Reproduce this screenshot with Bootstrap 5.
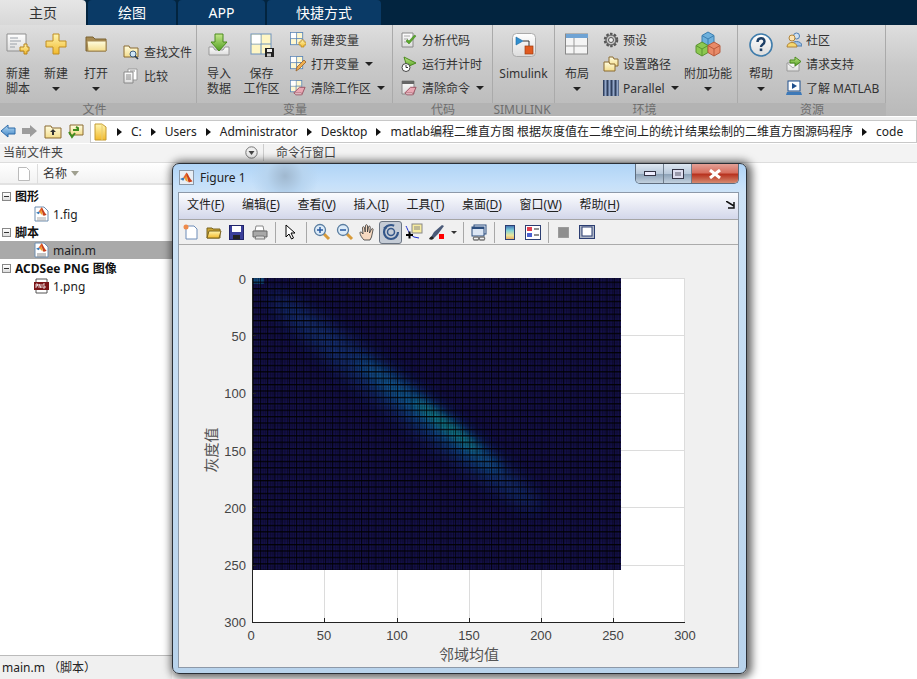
<!DOCTYPE html>
<html lang="zh">
<head>
<meta charset="utf-8">
<title>MATLAB</title>
<link href="https://cdn.jsdelivr.net/npm/bootstrap@5.3.0/dist/css/bootstrap.min.css" rel="stylesheet">
<style>
html,body{margin:0;height:679px;overflow:hidden}
body{font:12px/15px "Noto Sans","Noto Sans CJK SC",sans-serif;color:#333;background:#fff;position:relative;width:917px}
svg{display:block;flex:none}
.gdefs{width:0;height:0;position:absolute}
.topbar{height:25px;background:#02243f;gap:2px}
.ttab{height:25px;width:88px;color:#fff;font-size:14px;line-height:25px;text-align:center;background:#0a3a66;border-radius:4px 4px 0 0}
.ttab.on{background:linear-gradient(#e6e6e6,#d8d8d8);color:#333;width:86px;border-radius:0 4px 0 0}
.ttab.t3{width:87px}.ttab.t4{width:114px}
.ribbon{height:91px;background:linear-gradient(#dedede,#c9c9c9 45%,#b9b9b9)}
.rgrp{display:flex;flex-direction:column;flex:none;border-right:1px solid #aaa;position:relative}
.rbody{height:78px;padding-top:3px;display:flex;flex:none}
.rband{height:13px;background:#b3b3b3;color:#6e6e6e;text-align:center;line-height:14px;font-size:12px;margin-right:-1px}
.big{display:flex;flex-direction:column;align-items:center;flex:none;text-align:center}
.big .ib{height:38px;padding-top:5px}
.twol{font-family:"DejaVu Sans","Noto Sans CJK SC",sans-serif;margin-top:1px}
.smc{display:flex;flex-direction:column;flex:none}
.smi{height:24px;display:flex;align-items:center;gap:5px;white-space:nowrap;position:relative}
.tri{display:inline-block;border-style:solid;border-width:4px 4px 0;border-color:#222 transparent transparent;flex:none}
.big .tri{margin-top:6px;margin-bottom:5px}
.triR{display:inline-block;border-style:solid;border-width:4px 0 4px 5px;border-color:transparent transparent transparent #111;flex:none}
.addr{height:28px;background:#f0f0f0;border-bottom:1px solid #fff;box-shadow:inset 0 1px 0 #fff;padding-top:4px}
.pathbox{background:#fff;border:1px solid #c8c8c8;height:23px;margin-left:6px;flex:1;gap:9px;padding-left:3px;white-space:nowrap;overflow:hidden;color:#222}
.panehd{height:19px;background:#f3f3f3;color:#444;border-bottom:1px solid #ddd;padding-bottom:2px}
.panehd .pl{width:264px;padding-left:3px;border-right:1px solid #ccc;margin-right:12px;height:17px;justify-content:space-between;padding-right:5px}
.lside{width:172px;height:492px;position:absolute;left:0;top:163px;background:#fff}
.thead{height:22px;background:linear-gradient(#fff,#f2f2f2);border-bottom:2px solid #e2e2e2;position:relative;margin-bottom:2px;padding-top:1px}
.thead .csep{width:1px;height:20px;background:#ddd;margin:0 5px 0 19px}
.trow{height:18px;display:flex;align-items:center;white-space:nowrap;color:#222}
.trow.sec{font-weight:700;color:#111;padding-left:2px;gap:4px}
.trow.fil{padding-left:34px;gap:4px}
.trow.sel{background:#a9a9a9}
.pm{width:9px;height:9px;border:1px solid #888;background:linear-gradient(#fff,#ddd);position:relative;flex:none}
.pm::after{content:"";position:absolute;left:1px;top:3px;width:5px;height:1px;background:#333}
.stat{position:absolute;left:0;bottom:0;width:172px;height:24px;background:#f0f0f0;border-top:1px solid #bbb;padding:4px 2px;color:#222}
.fwin{position:absolute;left:172px;top:163px;width:575px;height:511px;border:1px solid #2a2f36;border-radius:7px;background:radial-gradient(circle at 112px 12px,#a0b8cf 0,#b7d4ef 18px,transparent 34px),linear-gradient(#b0d4f6,#c5e0fa 20px,#cde3f7 28px,#b8d3ec);box-shadow:2px 1px 9px 3px rgba(0,0,0,.6);overflow:hidden}
.wtitle{height:28px;padding-left:6px;padding-bottom:1px;gap:6px;color:#222;position:relative}
.wctl{position:absolute;right:7px;top:0;height:20px;display:flex;border:1px solid #5f6d7e;border-top:0;border-radius:0 0 5px 5px;overflow:hidden}
.wctl span{display:flex;align-items:center;justify-content:center;width:28px;background:linear-gradient(#dde7f1,#b9c9da 50%,#8ea3b8 55%,#c2d1df);border-right:1px solid #6f7d8c}
.wctl .cx{width:46px;border:0;background:linear-gradient(#e3a096,#d77060 45%,#b83420 55%,#d58a70)}
.wbody{margin:0 7px 0 5px;height:476px;border:1px solid #8d99a8;background:#f0f0f0;display:flex;flex-direction:column}
.wmenu{height:26px;background:linear-gradient(#fbfcfe,#d3d7ea);padding:0 0 3px 8px;gap:17.6px;position:relative;color:#222;white-space:nowrap;flex:none}
.wmenu u{text-underline-offset:2px}
.wmore{position:absolute;right:3px;top:8px}
.wtool{height:26px;background:#f0f0f0;border-top:1px solid #a5a5a5;border-bottom:1px solid #ababab;flex:none;align-items:center}
.tb{width:23px;height:23px;display:flex;align-items:center;justify-content:center;flex:none}
.tb.pressed{border:1px solid #6a7482;border-radius:3px;background:#c5ccd6}
.tsep{width:1px;height:21px;background:#a8a8a8;margin:0 3px 0 4px;flex:none}
.axt{font:13px "Liberation Sans",sans-serif;fill:#444}
.axl{font:15px "Liberation Serif","Noto Sans CJK SC",serif;fill:#555}
</style>
</head>
<body>
<svg class="gdefs" aria-hidden="true">
<defs>
<linearGradient id="gy" x1="0" y1="0" x2="0" y2="1"><stop offset="0" stop-color="#fff6b0"/><stop offset="1" stop-color="#f2b92c"/></linearGradient>
<linearGradient id="gf" x1="0" y1="0" x2="0" y2="1"><stop offset="0" stop-color="#fffde0"/><stop offset="1" stop-color="#f3dc8c"/></linearGradient>
<linearGradient id="gg" x1="0" y1="0" x2="0" y2="1"><stop offset="0" stop-color="#c5e88a"/><stop offset="1" stop-color="#4f9e20"/></linearGradient>
<linearGradient id="gp" x1="0" y1="0" x2="0" y2="1"><stop offset="0" stop-color="#fff"/><stop offset="1" stop-color="#dcdcdc"/></linearGradient>
<linearGradient id="gb" x1="0" y1="0" x2="0" y2="1"><stop offset="0" stop-color="#b8ddf6"/><stop offset="1" stop-color="#3e82c4"/></linearGradient>
<linearGradient id="gc" x1="0" y1="0" x2="0" y2="1"><stop offset="0" stop-color="#3d6db0"/><stop offset=".35" stop-color="#7fd0d8"/><stop offset=".7" stop-color="#e8e69a"/><stop offset="1" stop-color="#e9a860"/></linearGradient>
<filter id="b8" x="-30%" y="-100%" width="160%" height="300%"><feGaussianBlur stdDeviation="8"/></filter>
<filter id="b5" x="-30%" y="-100%" width="160%" height="300%"><feGaussianBlur stdDeviation="6"/></filter>
<filter id="b3" x="-30%" y="-100%" width="160%" height="300%"><feGaussianBlur stdDeviation="4"/></filter>
<pattern id="pv" width="7.22" height="10" patternUnits="userSpaceOnUse"><rect width="1.1" height="10" fill="#000" opacity=".8"/><rect x="2.9" width="1" height="10" fill="#000" opacity=".42"/><rect x="5.3" width="1" height="10" fill="#000" opacity=".42"/></pattern>
<pattern id="ph" width="10" height="6.4" patternUnits="userSpaceOnUse"><rect width="10" height="1.3" fill="#000" opacity=".92"/><rect y="3.2" width="10" height=".8" fill="#000" opacity=".25"/></pattern>
<symbol id="grid" viewBox="0 0 16 16"><rect x=".5" y=".5" width="14" height="14" fill="#fff8cf" stroke="#5a86b8"/><path d="M7.5 1v13M1 7.5h13" stroke="#5a86b8"/><rect x="1" y="1" width="6" height="6" fill="#fff"/></symbol>
<symbol id="eras" viewBox="0 0 14 10"><path d="M1 7l6-6h6l-3 7-1 1H3z" fill="#e9a8b4" stroke="#96505f"/><path d="M1 7h8l1 2H3z" fill="#f3d6dc" stroke="#96505f" stroke-width=".7"/></symbol>
<symbol id="mlogo" viewBox="0 0 14 14"><path d="M0 8.5l3.5-1.6L5 8 3.5 10.5z" fill="#3a7bb8"/><path d="M3.5 7L7 1.5l2 3-3 4z" fill="#e6642c"/><path d="M7 1.5c2 2 3.5 7 6.5 9.500-2 .8-3 1-4 1.500C8 10 7.500 6 7 1.500z" fill="#c8401c"/><path d="M5 8l2-3 1.500 7-2.500-2z" fill="#f0a030"/></symbol>
</defs>
</svg>

<div class="topbar d-flex">
  <div class="ttab on">主页</div><div class="ttab">绘图</div><div class="ttab t3">APP</div><div class="ttab t4">快捷方式</div>
</div>

<div class="ribbon d-flex">
  <section class="rgrp" style="width:197px">
    <div class="rbody">
      <div class="big" style="width:36px"><div class="ib"><svg width="24" height="24" viewBox="0 0 24 24"><path d="M1 1h19v17H1z" fill="url(#gp)" stroke="#8f8f8f"/><path d="M4 5h8M4 8h11M4 11h7M4 14h5" stroke="#9aa0a8"/><path d="M15 13h4v-3h3v3h2v4h-2v3h-3v-3h-4z" fill="url(#gy)" stroke="#b9851c" transform="translate(-1 1)"/></svg></div><div class="twol">新建<br>脚本</div></div>
      <div class="big ms-0" style="width:40px;margin-left:2px"><div class="ib"><svg width="22" height="24" viewBox="0 0 22 24"><path d="M8 1h6v7h7v6h-7v7H8v-7H1V8h7z" fill="url(#gy)" stroke="#c08d20"/></svg></div><div>新建</div><i class="tri"></i></div>
      <div class="big" style="width:40px"><div class="ib"><svg width="22" height="22" viewBox="0 0 22 22"><path d="M1 4h7l2 2h11v12H1z" fill="#a68a52" stroke="#7b6233"/><path d="M2 8h19v10H3z" fill="url(#gf)" stroke="#a68a52"/></svg></div><div>打开</div><i class="tri"></i></div>
      <div class="smc" style="margin-left:7px;padding-top:12px">
        <div class="smi"><svg width="16" height="16" viewBox="0 0 16 16"><path d="M1 2h5l1 2h8v9H1z" fill="url(#gf)" stroke="#8a6a30"/><circle cx="10" cy="10" r="3" fill="#cfe6f6" stroke="#3e5f80"/><path d="M12 12l3 3" stroke="#2c3e52" stroke-width="1.600"/></svg>查找文件</div>
        <div class="smi"><svg width="16" height="16" viewBox="0 0 16 16"><path d="M5 1h9v11H5z" fill="#fff" stroke="#999"/><path d="M1 4h9v11H1z" fill="url(#gp)" stroke="#888"/><path d="M3 7h5M3 9h5M3 11h5M7 3h5" stroke="#888"/></svg>比较</div>
      </div>
    </div>
    <div class="rband pe-2">文件</div>
  </section>
  <section class="rgrp" style="width:196px">
    <div class="rbody">
      <div class="big" style="width:42px;margin-left:1px"><div class="ib"><svg width="24" height="24" viewBox="0 0 24 24"><path d="M2 14h4l2 3h8l2-3h4v8H2z" fill="url(#gp)" stroke="#999"/><path d="M8 1h8v8h4l-8 9-8-9h4z" fill="url(#gg)" stroke="#4a8a1e"/></svg></div><div class="twol">导入<br>数据</div></div>
      <div class="big" style="width:43px"><div class="ib"><svg width="24" height="24" viewBox="0 0 24 24"><rect x="1" y="1" width="20" height="20" fill="#fff6c4" stroke="#6f94bd"/><path d="M11 1v20M1 11h20" stroke="#6f94bd"/><rect x="2" y="2" width="8.500" height="8.500" fill="#fff"/><rect x="15" y="15" width="9" height="9" fill="#222"/><rect x="17" y="16" width="5" height="3" fill="#eee"/><rect x="17" y="20.500" width="4" height="3" fill="#ccc"/></svg></div><div class="twol">保存<br>工作区</div></div>
      <div class="smc" style="margin-left:7px">
        <div class="smi"><svg width="16" height="16" viewBox="0 0 16 16"><use href="#grid" width="14" height="14"/><path d="M9 10h2V8h3v2h2v3h-2v2h-3v-2H9z" fill="url(#gy)" stroke="#b9851c" stroke-width=".7"/></svg>新建变量</div>
        <div class="smi"><svg width="16" height="16" viewBox="0 0 16 16"><use href="#grid" width="14" height="14"/><path d="M6 15l1-4 7-7 2 2-7 7z" fill="#f0b050" stroke="#95602a" stroke-width=".8"/></svg>打开变量<i class="tri" style="margin-left:1px"></i></div>
        <div class="smi"><svg width="16" height="16" viewBox="0 0 16 16"><use href="#grid" width="13" height="13"/><use href="#eras" x="3" y="6" width="13" height="10"/></svg>清除工作区<i class="tri" style="margin-left:1px"></i></div>
      </div>
    </div>
    <div class="rband">变量</div>
  </section>
  <section class="rgrp" style="width:100px">
    <div class="rbody">
      <div class="smc" style="margin-left:8px">
        <div class="smi"><svg width="16" height="16" viewBox="0 0 16 16"><path d="M1 1h11v14H1z" fill="url(#gp)" stroke="#888"/><path d="M3 4h6M3 7h4M3 10h3" stroke="#aaa"/><path d="M5 9l3 3 7-8-1.500-1L8 9 6.500 7.500z" fill="#5aa92c" stroke="#3d7a1c" stroke-width=".5"/></svg>分析代码</div>
        <div class="smi"><svg width="16" height="16" viewBox="0 0 16 16"><path d="M3 1l12 6-9 4z" fill="url(#gg)" stroke="#4a8a1e"/><circle cx="5" cy="11.500" r="4" fill="#fff" stroke="#444"/><path d="M5 9v2.500h2" stroke="#333" fill="none"/></svg>运行并计时</div>
        <div class="smi"><svg width="16" height="16" viewBox="0 0 16 16"><path d="M1 1h12v13H1z" fill="url(#gp)" stroke="#888"/><path d="M1 1h12v3H1z" fill="#666"/><use href="#eras" x="3" y="6" width="13" height="10"/></svg>清除命令<i class="tri" style="margin-left:1px"></i></div>
      </div>
    </div>
    <div class="rband">代码</div>
  </section>
  <section class="rgrp" style="width:62px">
    <div class="rbody">
      <div class="big w-100"><div class="ib"><svg width="24" height="24" viewBox="0 0 24 24"><rect x=".5" y=".5" width="23" height="23" rx="4" fill="url(#gp)" stroke="#aaa"/><path d="M4 4l7 4-7 4z" fill="#2f8fd0" stroke="#1c6aa0" stroke-width=".6"/><path d="M11 8h6v5" stroke="#333" fill="none"/><rect x="13" y="13" width="8" height="8" fill="#e05a20" stroke="#a03c10" stroke-width=".7"/></svg></div><div>Simulink</div></div>
    </div>
    <div class="rband pe-1">SIMULINK</div>
  </section>
  <section class="rgrp" style="width:183px">
    <div class="rbody">
      <div class="big" style="width:44px"><div class="ib"><svg width="24" height="22" viewBox="0 0 24 22"><rect x=".5" y="1" width="22" height="20" fill="#f4f4f4" stroke="#888"/><rect x="1" y="1" width="22" height="4" fill="#6fa3d4"/><path d="M1 13h22M9 5v16" stroke="#999"/></svg></div><div>布局</div><i class="tri"></i></div>
      <div class="smc" style="margin-left:4px;width:76px">
        <div class="smi"><svg width="16" height="16" viewBox="0 0 16 16"><circle cx="8" cy="8" r="6" fill="#c8c8c8" stroke="#555" stroke-width="2.500" stroke-dasharray="2.400 1.400"/><circle cx="8" cy="8" r="5" fill="none" stroke="#666" stroke-width="1.200"/><circle cx="8" cy="8" r="2.500" fill="#eee" stroke="#555"/></svg><span style="margin-left:-1px">预设</span></div>
        <div class="smi"><svg width="16" height="16" viewBox="0 0 16 16"><path d="M6 1h4l1 2h4v7H6z" fill="url(#gf)" stroke="#8a6a30"/><path d="M1 6h5l1 2h5v7H1z" fill="url(#gf)" stroke="#8a6a30"/></svg><span style="margin-left:-1px">设置路径</span></div>
        <div class="smi"><svg width="16" height="16" viewBox="0 0 16 16"><rect x="0" y="0" width="16" height="16" fill="#30405e"/><path d="M2.500 0v16M6.500 0v16M10.500 0v16M14.500 0v16" stroke="#92a6c8" stroke-width="2"/></svg><span style="margin-left:-1px">Parallel</span><i class="tri" style="margin-left:1px"></i></div>
      </div>
      <div class="big" style="width:56px;margin-left:1px"><div class="ib"><svg width="26" height="26" viewBox="0 0 26 26" style="margin-top:-2px"><path d="M13 1l6 3.500v7L13 15l-6-3.500v-7z" fill="#6eb0dc" stroke="#3b7eb0"/><path d="M7 4.500l6 3.500 6-3.500M13 8v7" fill="none" stroke="#3b7eb0"/><path d="M7 11l6 3.500v7L7 25l-6-3.500v-7z" fill="#8cc850" stroke="#5a9430"/><path d="M1 14.500L7 18l6-3.500M7 18v7" fill="none" stroke="#5a9430"/><path d="M19 11l6 3.500v7L19 25l-6-3.500v-7z" fill="#e88a68" stroke="#b85a3c"/><path d="M13 14.500l6 3.500 6-3.500M19 18v7" fill="none" stroke="#b85a3c"/></svg></div><div class="text-nowrap">附加功能</div><i class="tri"></i></div>
    </div>
    <div class="rband pe-1">环境</div>
  </section>
  <section class="rgrp" style="width:148px">
    <div class="rbody">
      <div class="big" style="width:46px"><div class="ib"><svg width="24" height="24" viewBox="0 0 24 24"><circle cx="12" cy="12" r="11" fill="url(#gp)" stroke="#3f7cab" stroke-width="1.600"/><path d="M8.500 9c0-5 7-5 7-.500 0 3-3.500 3-3.500 5.500" fill="none" stroke="#1d3f66" stroke-width="2.400"/><rect x="10.700" y="15.500" width="2.600" height="2.600" fill="#1d3f66"/></svg></div><div>帮助</div><i class="tri"></i></div>
      <div class="smc" style="margin-left:2px">
        <div class="smi"><svg width="16" height="16" viewBox="0 0 16 16"><circle cx="10.500" cy="4" r="3" fill="#cfe0f2" stroke="#4f7eb0"/><path d="M5 14c0-6 11-6 11 0z" fill="#9fc0e4" stroke="#4f7eb0"/><circle cx="6" cy="6" r="3" fill="#fde2b0" stroke="#b0843a"/><path d="M1 15c0-6 10-6 10 0z" fill="#f5d870" stroke="#b0843a"/></svg><span style="margin-left:-1px">社区</span></div>
        <div class="smi"><svg width="16" height="16" viewBox="0 0 16 16"><path d="M1 7h12v8H1z" fill="url(#gp)" stroke="#999"/><path d="M1 7l6 5 6-5" fill="none" stroke="#aaa"/><path d="M4 4h5V1l6 4.500-6 4.500V7H4z" fill="url(#gg)" stroke="#4a8a1e"/></svg><span style="margin-left:-1px">请求支持</span></div>
        <div class="smi"><svg width="16" height="16" viewBox="0 0 16 16"><rect x="2" y="1" width="12" height="10" fill="#fff" stroke="#1f4f8c"/><path d="M6 3l5 3-5 3z" fill="#1f4f8c"/><path d="M1 12h14l1 3H0z" fill="#3d79b8"/></svg><span style="margin-left:-1px">了解 MATLAB</span></div>
      </div>
    </div>
    <div class="rband">资源</div>
  </section>
  <div class="flex-fill"></div>
</div>

<div class="addr d-flex align-items-start">
  <svg width="16" height="22" viewBox="0 0 16 22"><path d="M1 11l7-6v3h7v6H8v3z" fill="url(#gb)" stroke="#2d6aa8"/></svg>
  <svg width="17" height="22" viewBox="0 0 17 22" style="margin-left:5px"><path d="M16 11l-7-6v3H1v6h8v3z" fill="#9c9c9c"/></svg>
  <svg width="18" height="22" viewBox="0 0 18 22" style="margin-left:6px"><path d="M1 6h6l1 2h9v10H1z" fill="url(#gf)" stroke="#8a6a30"/><path d="M9 9l3 3h-2v3H8v-3H6z" fill="#333"/></svg>
  <svg width="17" height="22" viewBox="0 0 17 22" style="margin-left:5px"><path d="M3 5h13v10H3z" fill="url(#gf)" stroke="#8a6a30"/><path d="M6 10h5V8l-2-1M2 12l3 5 3-4" fill="none" stroke="#3f8c1f" stroke-width="2"/></svg>
  <div class="pathbox d-flex align-items-center">
    <svg width="13" height="18" viewBox="0 0 13 18" style="margin-right:1px"><path d="M1 1h7l4 3v13H1z" fill="url(#gy)" stroke="#c49a30"/><path d="M8 1v16" stroke="#e7cc70"/></svg>
    <i class="triR"></i><span>C:</span><i class="triR"></i><span>Users</span><i class="triR"></i><span>Administrator</span><i class="triR"></i><span>Desktop</span><i class="triR"></i><span>matlab编程二维直方图 根据灰度值在二维空间上的统计结果绘制的二维直方图源码程序</span><i class="triR"></i><span>code</span>
  </div>
</div>

<div class="panehd d-flex align-items-center">
  <div class="pl d-flex align-items-center"><span>当前文件夹</span><svg width="13" height="13" viewBox="0 0 13 13"><circle cx="6.500" cy="6.500" r="5.700" fill="#eee" stroke="#777"/><path d="M3.500 5h6l-3 4z" fill="#444"/></svg></div>
  <span>命令行窗口</span>
</div>

<aside class="lside">
  <div class="thead d-flex align-items-center">
    <svg width="12" height="14" viewBox="0 0 12 14" style="margin-left:18px;margin-right:-12px"><path d="M.5.500h8l3 3v10H.500z" fill="#fff" stroke="#bbb"/></svg>
    <div class="csep" style="margin-left:19px"></div><span>名称</span><i class="tri ms-1" style="border-width:5px 4px 0;border-top-color:#a0a090"></i>
  </div>
  <div class="trow sec"><i class="pm"></i>图形</div>
  <div class="trow fil"><svg width="15" height="16" viewBox="0 0 15 16"><path d="M1 1h9l4 4v10H1z" fill="#fff" stroke="#6d8db0"/><use href="#mlogo" x="2" y="0" width="11" height="11"/><path d="M3 12h9M3 14h9" stroke="#aaa"/></svg>1.fig</div>
  <div class="trow sec"><i class="pm"></i>脚本</div>
  <div class="trow fil sel"><svg width="15" height="16" viewBox="0 0 15 16"><path d="M1 1h9l4 4v10H1z" fill="#fff" stroke="#6d8db0"/><use href="#mlogo" x="2" y="0" width="11" height="11"/><path d="M3 12h9M3 14h9" stroke="#888"/></svg>main.m</div>
  <div class="trow sec"><i class="pm"></i>ACDSee PNG 图像</div>
  <div class="trow fil"><svg width="15" height="16" viewBox="0 0 15 16"><path d="M2 1h11v14H2z" fill="#fff" stroke="#555"/><rect x="0" y="4" width="15" height="8" fill="#7a1418"/><path d="M2 10V6h1.500v2H2M5 10V6l2 4V6M11 6H9v4h2V8h-1" fill="none" stroke="#fff" stroke-width=".8"/></svg>1.png</div>
</aside>
<div class="stat">main.m （脚本）</div>

<div class="fwin">
  <div class="wtitle d-flex align-items-center">
    <svg width="15" height="15" viewBox="0 0 15 15"><rect x=".5" y=".5" width="14" height="14" fill="#e8eef5" stroke="#8a97a6"/><use href="#mlogo" x="1" y="1" width="13" height="13"/></svg>
    <span>Figure 1</span>
    <div class="wctl"><span><svg width="12" height="6" viewBox="0 0 12 6"><rect x=".5" y=".5" width="11" height="4" fill="#eef" stroke="#334"/></svg></span><span><svg width="12" height="10" viewBox="0 0 12 10"><rect x=".5" y=".5" width="11" height="9" fill="#dde" stroke="#334"/><rect x="3" y="3" width="6" height="4" fill="#99a"/></svg></span><span class="cx"><svg width="14" height="10" viewBox="0 0 14 10"><path d="M2 1l10 8M12 1L2 9" stroke="#fff" stroke-width="3"/></svg></span></div>
  </div>
  <div class="wbody">
    <div class="wmenu d-flex align-items-center">
      <span>文件(<u>F</u>)</span><span>编辑(<u>E</u>)</span><span>查看(<u>V</u>)</span><span>插入(<u>I</u>)</span><span>工具(<u>T</u>)</span><span>桌面(<u>D</u>)</span><span>窗口(<u>W</u>)</span><span>帮助(<u>H</u>)</span>
      <svg class="wmore" width="9" height="8" viewBox="0 0 9 8"><path d="M0 0l8 5M8 1v6H2" fill="none" stroke="#111" stroke-width="1.500"/></svg>
    </div>
    <div class="wtool d-flex">
      <span class="tb"><svg width="16" height="16" viewBox="0 0 16 16"><path d="M3 2h8l3 3v10H3z" fill="#fff" stroke="#6c8cb8"/><circle cx="3" cy="3" r="2.500" fill="#ee8a4a"/></svg></span>
      <span class="tb"><svg width="16" height="14" viewBox="0 0 16 14"><path d="M1 3h5l1 1h7v9H1z" fill="#c9a432" stroke="#7a6420"/><path d="M1 13l2-7h12l-2 7z" fill="url(#gy)" stroke="#7a6420"/></svg></span>
      <span class="tb"><svg width="15" height="15" viewBox="0 0 15 15"><rect x=".5" y=".5" width="14" height="14" fill="#3a3f9a" stroke="#20246a"/><rect x="3" y="1" width="9" height="6" fill="#fff"/><rect x="4" y="10" width="7" height="4.500" fill="#222"/></svg></span>
      <span class="tb"><svg width="16" height="15" viewBox="0 0 16 15"><path d="M4 1h7l1 5H3z" fill="#fff" stroke="#888"/><path d="M1 6h14v6H1z" fill="#a8a8a8" stroke="#666"/><path d="M4 11h8l1 3H3z" fill="#ddd" stroke="#777"/></svg></span>
      <i class="tsep"></i>
      <span class="tb"><svg width="12" height="16" viewBox="0 0 12 16"><path d="M1 1v12l3-3 2.500 5 2-1-2.500-5h4z" fill="#fff" stroke="#000"/></svg></span>
      <i class="tsep"></i>
      <span class="tb"><svg width="18" height="18" viewBox="0 0 18 18"><path d="M10 10l6 6" stroke="#d79a3a" stroke-width="3"/><circle cx="7" cy="7" r="5.500" fill="#dcebf8" stroke="#5a7da0" stroke-width="1.300"/><path d="M4 7h6M7 4v6" stroke="#2a5aa0" stroke-width="1.500"/></svg></span>
      <span class="tb"><svg width="18" height="18" viewBox="0 0 18 18"><path d="M10 10l6 6" stroke="#d79a3a" stroke-width="3"/><circle cx="7" cy="7" r="5.500" fill="#dcebf8" stroke="#5a7da0" stroke-width="1.300"/><path d="M4 7h6" stroke="#2a5aa0" stroke-width="1.500"/></svg></span>
      <span class="tb"><svg width="17" height="17" viewBox="0 0 17 17"><path d="M5 16c-2-2-4-5-4-7s2-1 3 1L3.500 4c0-2 2-1.500 2 0l.7 4L6.500 2c0-2 2-1.500 2 0v6l1-5c.3-1.500 2-1 1.800.500L10.500 9l2-4c.8-1.200 2 0 1.500 1L12.500 13 11 16z" fill="#f7d9c0" stroke="#333" stroke-width=".8"/></svg></span>
      <span class="tb pressed"><svg width="18" height="18" viewBox="0 0 18 18"><circle cx="9" cy="9" r="7" fill="none" stroke="#34578a" stroke-width="2.200" stroke-dasharray="36 8"/><path d="M1 5l3.500 1L5 2z" fill="#34578a"/><circle cx="9" cy="9" r="3.500" fill="none" stroke="#34578a" stroke-width="1.500"/></svg></span>
      <span class="tb"><svg width="18" height="18" viewBox="0 0 18 18"><rect x="7" y="1" width="10" height="9" fill="#f7eca0" stroke="#888"/><path d="M9 4h6M9 6h6" stroke="#888"/><path d="M1 3c2 4 3 8 8 11l5 1" fill="none" stroke="#1c2ccc"/><path d="M1 12h7M4.500 8.500v7" stroke="#000" stroke-width="2"/></svg></span>
      <span class="tb"><svg width="18" height="17" viewBox="0 0 18 17"><path d="M3 13l3-5L14 1l2 1-6 8-4 4z" fill="#4a5a78"/><path d="M1 15c1-2 2-3 4-2l1 1c-1 2-3 2-5 1z" fill="#222"/><rect x="11" y="10" width="5" height="5" fill="#ff0000"/></svg></span>
      <i class="tri" style="margin:0 0 0 3px;border-width:3px 3px 0;border-top-color:#333"></i>
      <i class="tsep" style="margin-left:6px"></i>
      <span class="tb"><svg width="16" height="17" viewBox="0 0 16 17"><rect x="3" y="1" width="12" height="9" fill="#e8eef8" stroke="#2c4e7e"/><rect x="1" y="3" width="12" height="9" fill="#dce6f4" stroke="#2c4e7e"/><rect x="1" y="3" width="12" height="2" fill="#2c4e7e"/><path d="M3 13h4a2 2 0 010 3H3a2 2 0 010-3zM9 13h4a2 2 0 010 3H9a2 2 0 010-3z" fill="none" stroke="#777" stroke-width="1.300"/></svg></span>
      <i class="tsep"></i>
      <span class="tb"><svg width="10" height="15" viewBox="0 0 10 15"><rect x=".5" y=".5" width="9" height="14" fill="url(#gc)" stroke="#2c3e72"/></svg></span>
      <span class="tb"><svg width="16" height="15" viewBox="0 0 16 15"><rect x=".5" y=".5" width="15" height="14" fill="#fff" stroke="#2c3e72"/><rect x="2" y="2" width="5" height="4" fill="#e04050"/><rect x="2" y="8" width="5" height="4" fill="#4a60d0"/><path d="M9 4h5M9 10h5" stroke="#222"/></svg></span>
      <i class="tsep"></i>
      <span class="tb"><svg width="11" height="11" viewBox="0 0 11 11"><rect width="11" height="11" fill="#8f8f8f" stroke="#a8a8a8"/></svg></span>
      <span class="tb"><svg width="16" height="14" viewBox="0 0 16 14"><rect x=".5" y=".5" width="15" height="13" fill="#b0b8c8" stroke="#2c3e72"/><rect x="3" y="2" width="10" height="9" fill="#fff" stroke="#2c3e72"/></svg></span>
    </div>
    <svg width="559" height="422" viewBox="179 245 559 422">
      <rect x="252" y="278" width="433" height="344" fill="#fff"/>
      <g stroke="#dcdcdc"><path d="M324.500 278v344M397.500 278v344M469.500 278v344M541.500 278v344M613.500 278v344M252 335.500h433M252 393.500h433M252 450.500h433M252 507.500h433M252 565.500h433M252 278.500h433M684.500 278v344"/></g>
      <svg x="252" y="278" width="369" height="292" viewBox="252 278 369 292">
        <rect x="252" y="278" width="369" height="292" fill="#15114e"/>
        <rect x="252" y="278" width="12" height="6" fill="#14508a"/>
        <ellipse cx="405" cy="402" rx="172" ry="17" fill="#123c86" opacity=".75" transform="rotate(38.500 405 402)" filter="url(#b8)"/>
        <ellipse cx="430" cy="416" rx="92" ry="10" fill="#0b6aa4" opacity=".75" transform="rotate(38.500 430 416)" filter="url(#b5)"/>
        <ellipse cx="447" cy="426" rx="42" ry="5" fill="#139a86" opacity=".7" transform="rotate(38.500 447 426)" filter="url(#b3)"/>
        <rect x="252" y="278" width="369" height="292" fill="url(#pv)"/>
        <rect x="252" y="278" width="369" height="292" fill="url(#ph)"/>
      </svg>
      <path d="M252.500 278v344M252 622.500h433" stroke="#222" fill="none"/>
      <path d="M324.500 622v-4M397.500 622v-4M469.500 622v-4M541.500 622v-4M613.500 622v-4M252 335.500h4M252 393.500h4M252 450.500h4M252 507.500h4M252 565.500h4" stroke="#222"/>
      <g class="axt" text-anchor="end">
        <text x="246" y="284">0</text><text x="246" y="341">50</text><text x="246" y="398">100</text><text x="246" y="456">150</text><text x="246" y="513">200</text><text x="246" y="570">250</text><text x="246" y="627">300</text>
      </g>
      <g class="axt" text-anchor="middle">
        <text x="251" y="640">0</text><text x="324" y="640">50</text><text x="397" y="640">100</text><text x="469" y="640">150</text><text x="541" y="640">200</text><text x="613" y="640">250</text><text x="685" y="640">300</text>
      </g>
      <text class="axl" x="469" y="660" text-anchor="middle">邻域均值</text>
      <text class="axl" x="217" y="450" text-anchor="middle" transform="rotate(-90 217 450)">灰度值</text>
    </svg>
  </div>
</div>
</body>
</html>
